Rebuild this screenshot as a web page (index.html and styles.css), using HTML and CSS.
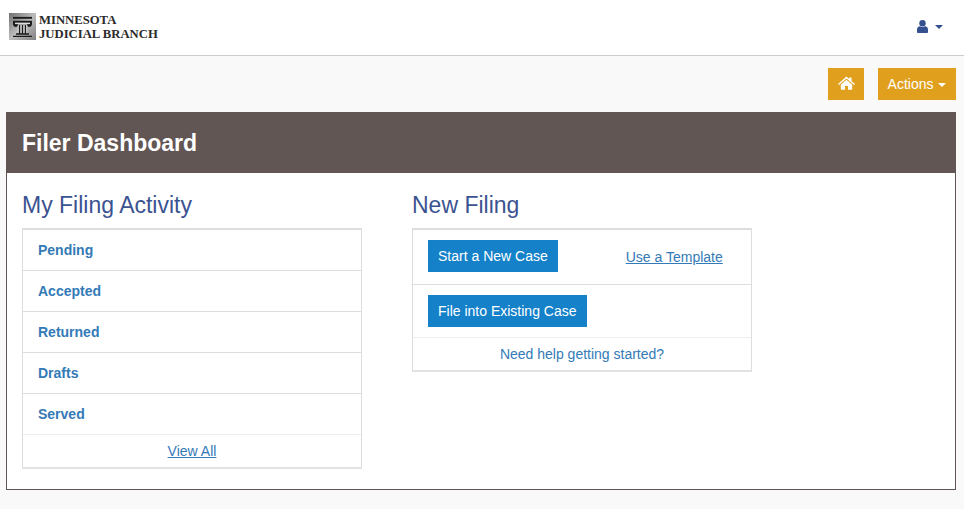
FILE: index.html
```html
<!DOCTYPE html>
<html lang="en">
<head>
<meta charset="utf-8">
<title>Filer Dashboard</title>
<link rel="stylesheet" href="styles.css">
</head>
<body>
<header class="navbar">
  <a class="brand" href="#">
    <svg class="seal" width="27" height="27" viewBox="0 0 27 28" preserveAspectRatio="none" aria-hidden="true">
      <defs><linearGradient id="sg" x1="0" y1="0" x2="1" y2="1"><stop offset="0" stop-color="#707070"/><stop offset=".5" stop-color="#bdbdbd"/><stop offset="1" stop-color="#808080"/></linearGradient></defs>
      <rect width="27" height="28" fill="url(#sg)"/>
      <path d="M4 4h19v2H4z" fill="#1c1c1c"/>
      <path d="M4 8h19v3.500c0 1.800-1.200 3-2.800 3-1.200 0-2-.8-2-1.800v-.7H8.800v.7c0 1-.8 1.800-2 1.800C5.200 14.500 4 13.300 4 11.500z" fill="#1c1c1c"/>
      <path d="M6 10h15v1.500H6z" fill="#ddd"/>
      <path d="M8.800 12h9.400v9H8.800z" fill="#e8e8e8"/>
      <path d="M9.800 12.500h1.500v8.500H9.800zM12.750 12.500h1.500v8.500h-1.500zM15.700 12.500h1.500v8.500h-1.500zM7 21h13v1.500H7zM4 23.500h19V25H4z" fill="#1c1c1c"/>
    </svg>
    <span class="brand-text">MINNESOTA<br>JUDICIAL BRANCH</span>
  </a>
  <button class="user" type="button" aria-label="User menu">
    <svg width="11" height="13" viewBox="0 0 11 13" aria-hidden="true"><circle cx="5.500" cy="3.300" r="3.200" fill="#34508f"/><path d="M0 12.200V9.500C0 7.700 1.200 6.500 3 6.300c.7.500 1.500.8 2.500.8s1.800-.3 2.500-.8c1.800.2 3 1.400 3 3.200v2.700c0 .5-.4.800-.8.800H.8c-.4 0-.8-.3-.8-.8z" fill="#34508f"/></svg>
    <span class="caret caret-user"></span>
  </button>
</header>
<div class="toolbar">
  <button class="btn-gold btn-home" type="button" aria-label="Home">
    <svg width="17" height="14" viewBox="0 0 17 14" aria-hidden="true"><path d="M8.500 0.500 L11.300 3V1.400h2.200v3.500L17 8l-.9 1-7.600-6.600L.9 9 0 8z" fill="#fff"/><path d="M2.800 8.700 8.500 3.800l5.700 4.900V13c0 .4-.3.700-.7.700H10V10H7v3.700H3.500c-.4 0-.7-.3-.7-.7z" fill="#fff"/></svg>
  </button>
  <button class="btn-gold btn-actions" type="button">Actions <span class="caret caret-white"></span></button>
</div>
<main class="panel">
  <h1 class="panel-title">Filer Dashboard</h1>
  <div class="panel-body">
    <section class="col">
      <h2 class="col-title">My Filing Activity</h2>
      <div class="card">
        <a class="row-link" href="#">Pending</a>
        <a class="row-link" href="#">Accepted</a>
        <a class="row-link" href="#">Returned</a>
        <a class="row-link" href="#">Drafts</a>
        <a class="row-link" href="#">Served</a>
        <div class="card-foot"><a class="ul" href="#">View All</a></div>
      </div>
    </section>
    <section class="col">
      <h2 class="col-title">New Filing</h2>
      <div class="card">
        <div class="row-action">
          <a class="btn-blue" href="#">Start a New Case</a>
          <a class="ul template" href="#">Use a Template</a>
        </div>
        <div class="row-action">
          <a class="btn-blue" href="#">File into Existing Case</a>
        </div>
        <div class="card-foot"><a class="plain" href="#">Need help getting started?</a></div>
      </div>
    </section>
  </div>
</main>
</body>
</html>
```

FILE: styles.css
```css
* { box-sizing: border-box; }
html, body { margin: 0; padding: 0; }
body {
  width: 964px;
  height: 509px;
  overflow: hidden;
  background: #f9f9f9;
  font-family: "Liberation Sans", Arial, sans-serif;
  font-size: 14px;
  color: #333;
}
a { color: #337ab7; text-decoration: none; }

.navbar {
  height: 56px;
  background: #fff;
  border-bottom: 1px solid #ccc;
  display: flex;
  align-items: center;
  justify-content: space-between;
  padding: 0 21px 2px 9px;
}
.brand { display: flex; align-items: center; gap: 3px; }
.seal { display: block; }
.brand-text {
  font-family: "Liberation Serif", "Times New Roman", serif;
  font-weight: 700;
  font-size: 12.700px;
  line-height: 14px;
  color: #2b2b2b;
}
.user {
  display: flex;
  align-items: center;
  gap: 7px;
  background: none;
  border: 0;
  padding: 0;
}
.caret {
  display: inline-block;
  width: 0;
  height: 0;
  border-left: 4px solid transparent;
  border-right: 4px solid transparent;
  border-top: 4px solid #34508f;
}
.caret-user { border-left-width: 4.500px; border-right-width: 4.500px; }
.caret-white { border-top-color: #fff; vertical-align: middle; margin-left: 1px; }

.toolbar {
  display: flex;
  justify-content: flex-end;
  gap: 14px;
  padding: 12px 8px 12px 0;
}
.btn-gold {
  height: 32px;
  background: #e0a01e;
  border: 0;
  color: #fff;
  font: 14px "Liberation Sans", Arial, sans-serif;
  padding: 0;
}
.btn-home { width: 36px; display: flex; align-items: center; justify-content: center; padding-bottom: 2px; }
.btn-actions { width: 78px; }

.panel {
  margin: 0 8px 0 6px;
  height: 378px;
  background: #fff;
  border: 1px solid #625655;
}
.panel-title {
  margin: -1px -1px 0;
  height: 61px;
  background: #625655;
  color: #fff;
  font-size: 23px;
  font-weight: 700;
  line-height: 62px;
  padding-left: 16px;
}
.panel-body {
  display: flex;
  gap: 50px;
  padding: 17px 15px 0;
}
.col { width: 340px; }
.col-title {
  margin: 0 0 7px;
  font-size: 23px;
  font-weight: 400;
  line-height: 31px;
  color: #3b5391;
}
.card {
  background: #fff;
  border: 1px solid #ddd;
  border-top: 2px solid #ddd;
  border-bottom: 2px solid #e2e2e2;
}
.row-link {
  display: block;
  height: 41px;
  line-height: 40px;
  padding-left: 15px;
  font-weight: 700;
  border-bottom: 1px solid #ddd;
}
.row-link:nth-child(5) { border-bottom-color: #eee; }
.row-action {
  height: 55px;
  padding: 10px 15px 0;
  display: flex;
  align-items: flex-start;
  border-bottom: 1px solid #ddd;
}
.row-action + .row-action { height: 53px; border-bottom-color: #eee; }
.btn-blue {
  display: block;
  height: 32px;
  line-height: 32px;
  padding: 0 10px;
  background: #1481c9;
  color: #fff;
}
.template { margin: 8px 0 0 68px; line-height: 18px; }
.card-foot {
  height: 32px;
  line-height: 32px;
  text-align: center;
}
.ul { text-decoration: underline; }
.plain { color: #337ab7; }
```
